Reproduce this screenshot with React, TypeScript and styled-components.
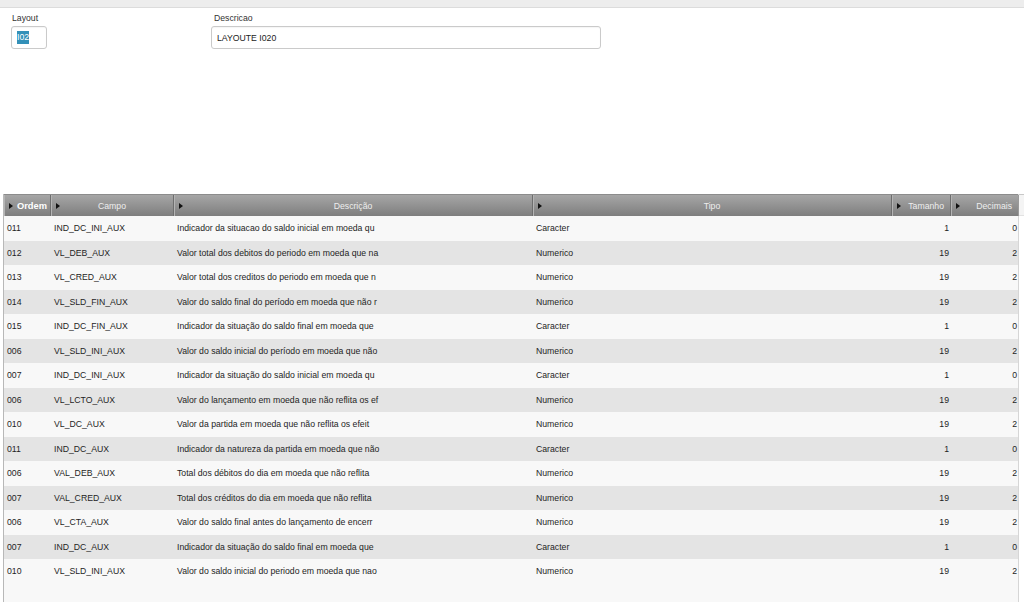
import React from "react";
import styled, { createGlobalStyle } from "styled-components";

type Row = {
  ordem: string;
  campo: string;
  descricao: string;
  tipo: string;
  tamanho: string;
  decimais: string;
};

const rows: Row[] = [
  { ordem: "011", campo: "IND_DC_INI_AUX", descricao: "Indicador da situacao do saldo inicial em moeda qu", tipo: "Caracter", tamanho: "1", decimais: "0" },
  { ordem: "012", campo: "VL_DEB_AUX", descricao: "Valor total dos debitos do periodo em moeda que na", tipo: "Numerico", tamanho: "19", decimais: "2" },
  { ordem: "013", campo: "VL_CRED_AUX", descricao: "Valor total dos creditos do periodo em moeda que n", tipo: "Numerico", tamanho: "19", decimais: "2" },
  { ordem: "014", campo: "VL_SLD_FIN_AUX", descricao: "Valor do saldo final do período em moeda que não r", tipo: "Numerico", tamanho: "19", decimais: "2" },
  { ordem: "015", campo: "IND_DC_FIN_AUX", descricao: "Indicador da situação do saldo final em moeda que", tipo: "Caracter", tamanho: "1", decimais: "0" },
  { ordem: "006", campo: "VL_SLD_INI_AUX", descricao: "Valor do saldo inicial do período em moeda que não", tipo: "Numerico", tamanho: "19", decimais: "2" },
  { ordem: "007", campo: "IND_DC_INI_AUX", descricao: "Indicador da situação do saldo inicial em moeda qu", tipo: "Caracter", tamanho: "1", decimais: "0" },
  { ordem: "006", campo: "VL_LCTO_AUX", descricao: "Valor do lançamento em moeda que não reflita os ef", tipo: "Numerico", tamanho: "19", decimais: "2" },
  { ordem: "010", campo: "VL_DC_AUX", descricao: "Valor da partida em moeda que não reflita os efeit", tipo: "Numerico", tamanho: "19", decimais: "2" },
  { ordem: "011", campo: "IND_DC_AUX", descricao: "Indicador da natureza da partida em moeda que não", tipo: "Caracter", tamanho: "1", decimais: "0" },
  { ordem: "006", campo: "VAL_DEB_AUX", descricao: "Total dos débitos do dia em moeda que não reflita", tipo: "Numerico", tamanho: "19", decimais: "2" },
  { ordem: "007", campo: "VAL_CRED_AUX", descricao: "Total dos créditos do dia em moeda que não reflita", tipo: "Numerico", tamanho: "19", decimais: "2" },
  { ordem: "006", campo: "VL_CTA_AUX", descricao: "Valor do saldo final antes do lançamento de encerr", tipo: "Numerico", tamanho: "19", decimais: "2" },
  { ordem: "007", campo: "IND_DC_AUX", descricao: "Indicador da situação do saldo final em moeda que", tipo: "Caracter", tamanho: "1", decimais: "0" },
  { ordem: "010", campo: "VL_SLD_INI_AUX", descricao: "Valor do saldo inicial do periodo em moeda que nao", tipo: "Numerico", tamanho: "19", decimais: "2" },
];

const COLS = "47px 123px 359px 359px 59px 68px";

const App: React.FC = () => {
  return (
    <>
      <GlobalStyle />
      <Page>
        <TopBar />
        <Form>
          <Field $width={36}>
            <Label>Layout</Label>
            <Input>
              <Selected>I02</Selected>
            </Input>
          </Field>
          <Field $width={390}>
            <Label $indent={3}>Descricao</Label>
            <Input>LAYOUTE I020</Input>
          </Field>
        </Form>

        <Grid>
          <GridBody>
            <HeaderRow>
              <HeadCell $align="left" $strong>
                <Arrow />
                Ordem
              </HeadCell>
              <HeadCell $align="center">
                <Arrow />
                Campo
              </HeadCell>
              <HeadCell $align="center">
                <Arrow />
                Descrição
              </HeadCell>
              <HeadCell $align="center">
                <Arrow />
                Tipo
              </HeadCell>
              <HeadCell $align="right">
                <Arrow />
                Tamanho
              </HeadCell>
              <HeadCell $align="right">
                <Arrow />
                Decimais
              </HeadCell>
            </HeaderRow>
            {rows.map((r, i) => (
              <DataRow key={i} $even={i % 2 === 1}>
                <Cell>{r.ordem}</Cell>
                <Cell>{r.campo}</Cell>
                <Cell>{r.descricao}</Cell>
                <Cell>{r.tipo}</Cell>
                <Cell $right>{r.tamanho}</Cell>
                <Cell $right>{r.decimais}</Cell>
              </DataRow>
            ))}
            <Filler />
          </GridBody>
          <ScrollGutter>
            <GutterHead />
          </ScrollGutter>
        </Grid>
      </Page>
    </>
  );
};

const GlobalStyle = createGlobalStyle`
  html, body {
    margin: 0;
    padding: 0;
    background: #ffffff;
    font-family: "Liberation Sans", Arial, sans-serif;
    font-size: 9px;
    color: #222;
  }
  #root {
    height: 602px;
  }
`;

const Page = styled.div`
  height: 602px;
  display: flex;
  flex-direction: column;
  overflow: hidden;
`;

const TopBar = styled.div`
  height: 7px;
  background: #ededed;
  border-bottom: 1px solid #dcdcdc;
  flex: none;
`;

const Form = styled.div`
  display: flex;
  gap: 164px;
  padding: 5px 0 0 11px;
  height: 181px;
  flex: none;
`;

const Field = styled.div<{ $width: number }>`
  display: flex;
  flex-direction: column;
  width: ${({ $width }) => $width}px;
`;

const Label = styled.div<{ $indent?: number }>`
  font-size: 8.7px;
  color: #333;
  height: 13px;
  line-height: 11px;
  padding-left: ${({ $indent }) => $indent ?? 1}px;
`;

const Input = styled.div`
  box-sizing: border-box;
  height: 23px;
  border: 1px solid #cacaca;
  border-radius: 3px;
  background: #fff;
  padding: 0 5px;
  display: flex;
  align-items: center;
  font-size: 8.7px;
  color: #222;
  box-shadow: inset 0 1px 1px rgba(0, 0, 0, 0.04);
`;

const Selected = styled.span`
  background: #3390b8;
  color: #fff;
  padding: 1px 0;
  line-height: 11px;
`;

const Grid = styled.div`
  flex: 1;
  display: flex;
  margin-left: 3px;
`;

const GridBody = styled.div`
  width: 1015px;
  display: flex;
  flex-direction: column;
  border-left: 1px solid #b8b8b8;
  box-sizing: border-box;
  background: #f8f8f8;
`;

const HeaderRow = styled.div`
  display: grid;
  grid-template-columns: ${COLS};
  height: 22px;
  box-sizing: border-box;
  border-top: 1px solid #8c8c8c;
  background: linear-gradient(#a6a6a6, #7e7e7e);
`;

const HeadCell = styled.div<{ $align: "left" | "center" | "right"; $strong?: boolean }>`
  position: relative;
  display: flex;
  align-items: center;
  justify-content: ${({ $align }) =>
    $align === "left" ? "flex-start" : $align === "center" ? "center" : "flex-end"};
  padding: 0 6px 0 ${({ $align }) => ($align === "left" ? "13px" : "6px")};
  font-size: ${({ $strong }) => ($strong ? "9.3px" : "8.7px")};
  font-weight: ${({ $strong }) => ($strong ? 700 : 400)};
  color: ${({ $strong }) => ($strong ? "#ffffff" : "#eeeeee")};
  border-right: 1px solid #6e6e6e;
  box-shadow: inset 1px 0 0 #b4b4b4;
  white-space: nowrap;
  &:last-child {
    border-right: 1px solid #9a9a9a;
  }
`;

const Arrow = styled.span`
  position: absolute;
  left: 5px;
  top: 50%;
  margin-top: -3px;
  width: 0;
  height: 0;
  border-top: 3px solid transparent;
  border-bottom: 3px solid transparent;
  border-left: 4px solid #111;
`;

const DataRow = styled.div<{ $even: boolean }>`
  display: grid;
  grid-template-columns: ${COLS};
  height: 24.5px;
  background: ${({ $even }) => ($even ? "#e4e4e4" : "#f8f8f8")};
`;

const Cell = styled.div<{ $right?: boolean }>`
  display: flex;
  align-items: center;
  justify-content: ${({ $right }) => ($right ? "flex-end" : "flex-start")};
  padding: ${({ $right }) => ($right ? "0 2px 0 0" : "0 0 0 3px")};
  font-size: 8.7px;
  color: #1e1e1e;
  white-space: nowrap;
  overflow: hidden;
`;

const Filler = styled.div`
  flex: 1;
`;

const ScrollGutter = styled.div`
  flex: 1;
  border-left: 1px solid #d6d6d6;
  background: #ffffff;
`;

const GutterHead = styled.div`
  height: 22px;
  box-sizing: border-box;
  border-top: 1px solid #c8c8c8;
  border-bottom: 1px solid #e2e2e2;
  background: #f4f4f4;
`;

export default App;
